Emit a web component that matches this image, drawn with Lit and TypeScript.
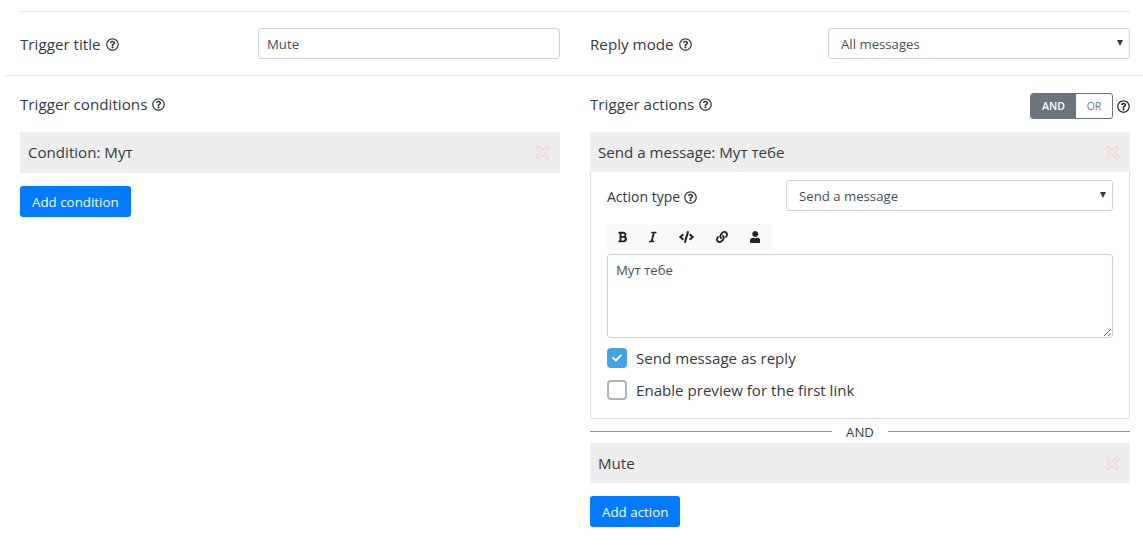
import { LitElement, html, css, svg } from "lit";
import { customElement } from "lit/decorators.js";

const ICONS: Record<string, [number, string]> = {
  help: [512, "M256 8C119.043 8 8 119.083 8 256c0 136.997 111.043 248 248 248s248-111.003 248-248C504 119.083 392.957 8 256 8zm0 448c-110.532 0-200-89.431-200-200 0-110.495 89.472-200 200-200 110.491 0 200 89.471 200 200 0 110.529-89.431 200-200 200zm107.244-255.2c0 67.052-72.421 68.084-72.421 92.863V300c0 6.627-5.373 12-12 12h-45.647c-6.627 0-12-5.373-12-12v-8.659c0-35.745 27.1-50.034 47.579-61.516 17.561-9.845 28.324-16.541 28.324-29.579 0-17.246-21.999-28.693-39.784-28.693-23.189 0-33.894 10.977-48.942 29.969-4.057 5.12-11.46 6.071-16.666 2.124l-27.824-21.098c-5.107-3.872-6.251-11.066-2.644-16.363C184.846 131.491 214.94 112 261.794 112c49.071 0 101.45 38.304 101.45 88.8zM298 368c0 23.159-18.841 42-42 42s-42-18.841-42-42 18.841-42 42-42 42 18.841 42 42z"],
  times: [352, "M242.72 256l100.07-100.07c12.28-12.28 12.28-32.19 0-44.48l-22.24-22.24c-12.28-12.28-32.19-12.28-44.48 0L176 189.28 75.93 89.21c-12.28-12.28-32.19-12.28-44.48 0L9.21 111.45c-12.28 12.28-12.28 32.19 0 44.48L109.28 256 9.21 356.07c-12.28 12.28-12.28 32.19 0 44.48l22.24 22.24c12.28 12.28 32.2 12.28 44.48 0L176 322.72l100.07 100.07c12.28 12.28 32.2 12.28 44.48 0l22.24-22.24c12.28-12.28 12.28-32.19 0-44.48L242.72 256z"],
  bold: [384, "M333.49 238a122 122 0 0 0 27-65.21C367.87 96.49 308 32 233.42 32H34a16 16 0 0 0-16 16v48a16 16 0 0 0 16 16h31.87v288H34a16 16 0 0 0-16 16v48a16 16 0 0 0 16 16h209.32c70.8 0 134.14-51.75 141-122.4 4.74-48.45-16.39-92.06-50.83-119.6zM145.66 112h87.76a48 48 0 0 1 0 96h-87.76zm87.76 288h-87.76V288h87.76a56 56 0 0 1 0 112z"],
  italic: [320, "M320 48v32a16 16 0 0 1-16 16h-62.76l-80 320H208a16 16 0 0 1 16 16v32a16 16 0 0 1-16 16H16a16 16 0 0 1-16-16v-32a16 16 0 0 1 16-16h62.76l80-320H112a16 16 0 0 1-16-16V48a16 16 0 0 1 16-16h192a16 16 0 0 1 16 16z"],
  code: [640, "M278.9 511.5l-61-17.7c-6.4-1.8-10-8.5-8.2-14.9L346.2 8.7c1.8-6.4 8.5-10 14.9-8.2l61 17.7c6.4 1.8 10 8.5 8.2 14.9L293.8 503.3c-1.9 6.4-8.5 10.1-14.9 8.2zm-114-112.2l43.5-46.4c4.6-4.9 4.3-12.7-.8-17.2L117 256l90.6-79.7c5.1-4.5 5.5-12.3.8-17.2l-43.5-46.4c-4.5-4.8-12.1-5.1-17-.5L3.8 247.2c-5.1 4.7-5.1 12.8 0 17.5l144.1 135.1c4.9 4.6 12.5 4.4 17-.5zm327.2.6l144.1-135.1c5.1-4.7 5.1-12.8 0-17.5L492.1 112.1c-4.8-4.5-12.4-4.3-17 .5L431.6 159c-4.6 4.9-4.3 12.7.8 17.2L523 256l-90.6 79.7c-5.1 4.5-5.5 12.3-.8 17.2l43.5 46.4c4.5 4.9 12.1 5.1 17 .6z"],
  link: [512, "M326.612 185.391c59.747 59.809 58.927 155.698.36 214.59-.11.12-.24.25-.36.37l-67.2 67.2c-59.27 59.27-155.699 59.262-214.96 0-59.27-59.26-59.27-155.7 0-214.96l37.106-37.106c9.84-9.84 26.786-3.3 27.294 10.606.648 17.722 3.826 35.527 9.69 52.721 1.986 5.822.567 12.262-3.783 16.612l-13.087 13.087c-28.026 28.026-28.905 73.66-1.155 101.96 28.024 28.579 74.086 28.749 102.325.51l67.2-67.19c28.191-28.191 28.073-73.757 0-101.83-3.701-3.694-7.429-6.564-10.341-8.569a16.037 16.037 0 0 1-6.947-12.606c-.396-10.567 3.348-21.456 11.698-29.806l21.054-21.055c5.521-5.521 14.182-6.199 20.584-1.731a152.482 152.482 0 0 1 20.522 17.197zM467.547 44.449c-59.261-59.262-155.69-59.27-214.96 0l-67.2 67.2c-.12.12-.25.25-.36.37-58.566 58.892-59.387 154.781.36 214.59a152.454 152.454 0 0 0 20.521 17.196c6.402 4.468 15.064 3.789 20.584-1.731l21.054-21.055c8.35-8.35 12.094-19.239 11.698-29.806a16.037 16.037 0 0 0-6.947-12.606c-2.912-2.005-6.64-4.875-10.341-8.569-28.073-28.073-28.191-73.639 0-101.83l67.2-67.19c28.239-28.239 74.3-28.069 102.325.51 27.75 28.3 26.872 73.934-1.155 101.96l-13.087 13.087c-4.35 4.35-5.769 10.79-3.783 16.612 5.864 17.194 9.042 34.999 9.69 52.721.509 13.906 17.454 20.446 27.294 10.606l37.106-37.106c59.271-59.259 59.271-155.699.001-214.959z"],
  user: [448, "M224 256c70.7 0 128-57.3 128-128S294.7 0 224 0 96 57.3 96 128s57.3 128 128 128zm89.6 32h-16.7c-22.2 10.2-46.9 16-72.9 16s-50.6-5.8-72.9-16h-16.7C60.2 288 0 348.2 0 422.4V464c0 26.5 21.5 48 48 48h352c26.5 0 48-21.5 48-48v-41.6c0-74.2-60.2-134.4-134.4-134.4z"],
  check: [512, "M173.898 439.404l-166.4-166.4c-9.997-9.997-9.997-26.206 0-36.204l36.203-36.204c9.997-9.998 26.207-9.998 36.204 0L192 312.69 432.095 72.596c9.997-9.997 26.207-9.997 36.204 0l36.203 36.204c9.997 9.997 9.997 26.206 0 36.204l-294.4 294.401c-9.998 9.997-26.207 9.997-36.204-.001z"],
};

function icon(name: string, cls = "") {
  const [w, d] = ICONS[name];
  return html`<svg class="ic ${cls}" viewBox="0 0 ${w} 512" aria-hidden="true">${svg`<path d=${d}></path>`}</svg>`;
}

@customElement("app-root")
export class AppRoot extends LitElement {
  static styles = css`
    :host {
      display: block;
      width: 1143px;
      height: 550px;
      overflow: hidden;
      background: #fff;
      color: #343a40;
      font-family: "Open Sans", "Noto Sans", sans-serif;
      font-size: 14px;
      line-height: 20px;
      box-sizing: border-box;
      padding-top: 11px;
    }
    * { box-sizing: border-box; }
    .ic { height: 13px; fill: currentColor; display: inline-block; flex: none; }
    .rule-top { height: 1px; background: #e6e6e6; margin: 0 13px 0 20px; }
    .rule-mid { height: 1px; background: #e6e6e6; margin-left: 5px; }
    .settings {
      display: grid;
      grid-template-columns: 540px 540px;
      column-gap: 30px;
      padding: 16px 13px 16px 20px;
    }
    .field { display: grid; grid-template-columns: 238px 302px; align-items: center; height: 31px; }
    .lbl { display: flex; align-items: center; gap: 5px; font-size: 15.2px; }
    .lbl .ic { margin-top: 1px; }
    .field .lbl { padding-top: 1px; }
    .col-head .lbl { padding-bottom: 2px; }
    .input, .select {
      width: 100%;
      height: 31px;
      border: 1px solid #ced4da;
      border-radius: 3px;
      background: #fff;
      color: #495057;
      font: inherit;
      font-size: 13.2px;
      padding: 0 8px;
      outline: none;
    }
    .sel-wrap { position: relative; display: block; }
    .select { appearance: none; padding-left: 12px; }
    .sel-wrap::after {
      content: "";
      position: absolute;
      right: 7px;
      top: 12px;
      border-left: 3.5px solid transparent;
      border-right: 3.5px solid transparent;
      border-top: 6px solid #343a40;
    }
    .cols {
      display: grid;
      grid-template-columns: 540px 540px;
      column-gap: 30px;
      padding: 16px 13px 0 20px;
    }
    .col-head { display: flex; align-items: center; justify-content: space-between; height: 26px; margin-bottom: 14px; }
    .toggle-wrap { display: flex; align-items: center; gap: 4px; color: #212529; margin-top: 2px; }
    .toggle {
      display: flex;
      width: 83px;
      height: 26px;
      border: 1px solid #6c757d;
      border-radius: 3px;
      font-size: 10.5px;
      font-weight: 600;
      overflow: hidden;
    }
    .toggle span { display: flex; align-items: center; justify-content: center; }
    .t-on { width: 45px; background: #6c757d; color: #fff; }
    .t-off { flex: 1; color: #6c757d; font-weight: 400; }
    .bar {
      display: flex;
      align-items: center;
      justify-content: space-between;
      background: #eee;
      height: 40px;
      padding: 0 11px 0 8px;
      font-size: 15.1px;
    }
    .bar.tall { height: 41px; padding-bottom: 1px; }
    .x { height: 19px; fill: #f6e6e6; stroke: #f0c4c7; stroke-width: 20px; }
    .btn {
      display: inline-flex;
      align-items: center;
      justify-content: center;
      height: 31px;
      padding: 0 12px;
      border: 0;
      border-radius: 3px;
      background: #007bff;
      color: #fff;
      font: inherit;
      font-size: 13.35px;
    }
    .btn-row { margin-top: 13px; }
    .panel { border: 1px solid #e0e0e0; border-top: 0; padding: 8px 16px 12px 16px; height: 247px; }
    .action-type { display: grid; grid-template-columns: 179px 327px; align-items: center; height: 31px; }
    .action-type .lbl { font-size: 14px; gap: 4px; padding-top: 2px; }
    .toolbar {
      display: flex;
      align-items: center;
      width: 165px;
      height: 26px;
      margin-top: 13px;
      background: #f8f9fa;
      color: #212529;
    }
    .toolbar span { padding: 0 11px; display: flex; justify-content: center; }
    .toolbar .ic { height: 12px; }
    .ta {
      display: block;
      width: 506px;
      height: 84px;
      margin-top: 4px;
      border: 1px solid #ced4da;
      border-radius: 3px;
      padding: 5px 8px;
      font: inherit;
      font-size: 13.2px;
      line-height: 20px;
      color: #495057;
      outline: none;
    }
    .chk { display: flex; align-items: center; gap: 9px; height: 20px; font-size: 15.1px; margin-top: 10px; }
    .chk + .chk { margin-top: 12px; }
    .box {
      width: 20px;
      height: 20px;
      border-radius: 4px;
      border: 2px solid #adb5bd;
      background: #fff;
      display: flex;
      align-items: center;
      justify-content: center;
    }
    .box.on { background: #3ea6e6; border-color: #3ea6e6; color: #fff; }
    .box .ic { height: 10px; }
    .sep { display: flex; align-items: center; height: 24px; font-size: 13.2px; color: #343a40; }
    .sep i { flex: 1; height: 1px; background: #45b0c8; }
    .sep b { font-weight: 400; width: 56px; text-align: center; padding-top: 1px; }
  `;

  render() {
    return html`
      <div class="rule-top"></div>
      <div class="settings">
        <div class="field">
          <span class="lbl">Trigger title ${icon("help")}</span>
          <input class="input" .value=${"Mute"} aria-label="Trigger title" />
        </div>
        <div class="field">
          <span class="lbl">Reply mode ${icon("help")}</span>
          <span class="sel-wrap">
            <select class="select" aria-label="Reply mode"><option>All messages</option></select>
          </span>
        </div>
      </div>
      <div class="rule-mid"></div>
      <div class="cols">
        <section>
          <div class="col-head"><span class="lbl">Trigger conditions ${icon("help")}</span></div>
          <div class="bar tall"><span>Condition: Мут</span>${icon("times", "x")}</div>
          <div class="btn-row"><button class="btn">Add condition</button></div>
        </section>
        <section>
          <div class="col-head">
            <span class="lbl">Trigger actions ${icon("help")}</span>
            <div class="toggle-wrap">
              <div class="toggle"><span class="t-on">AND</span><span class="t-off">OR</span></div>
              ${icon("help")}
            </div>
          </div>
          <div class="bar"><span>Send a message: Мут тебе</span>${icon("times", "x")}</div>
          <div class="panel">
            <div class="action-type">
              <span class="lbl">Action type ${icon("help")}</span>
              <span class="sel-wrap">
                <select class="select" aria-label="Action type"><option>Send a message</option></select>
              </span>
            </div>
            <div class="toolbar">
              <span>${icon("bold")}</span><span>${icon("italic")}</span><span>${icon("code")}</span><span>${icon("link")}</span><span>${icon("user")}</span>
            </div>
            <textarea class="ta" aria-label="Message" .value=${"Мут тебе"}></textarea>
            <div class="chk"><span class="box on">${icon("check")}</span><span>Send message as reply</span></div>
            <div class="chk"><span class="box"></span><span>Enable preview for the first link</span></div>
          </div>
          <div class="sep"><i></i><b>AND</b><i></i></div>
          <div class="bar"><span>Mute</span>${icon("times", "x")}</div>
          <div class="btn-row"><button class="btn">Add action</button></div>
        </section>
      </div>
    `;
  }
}
